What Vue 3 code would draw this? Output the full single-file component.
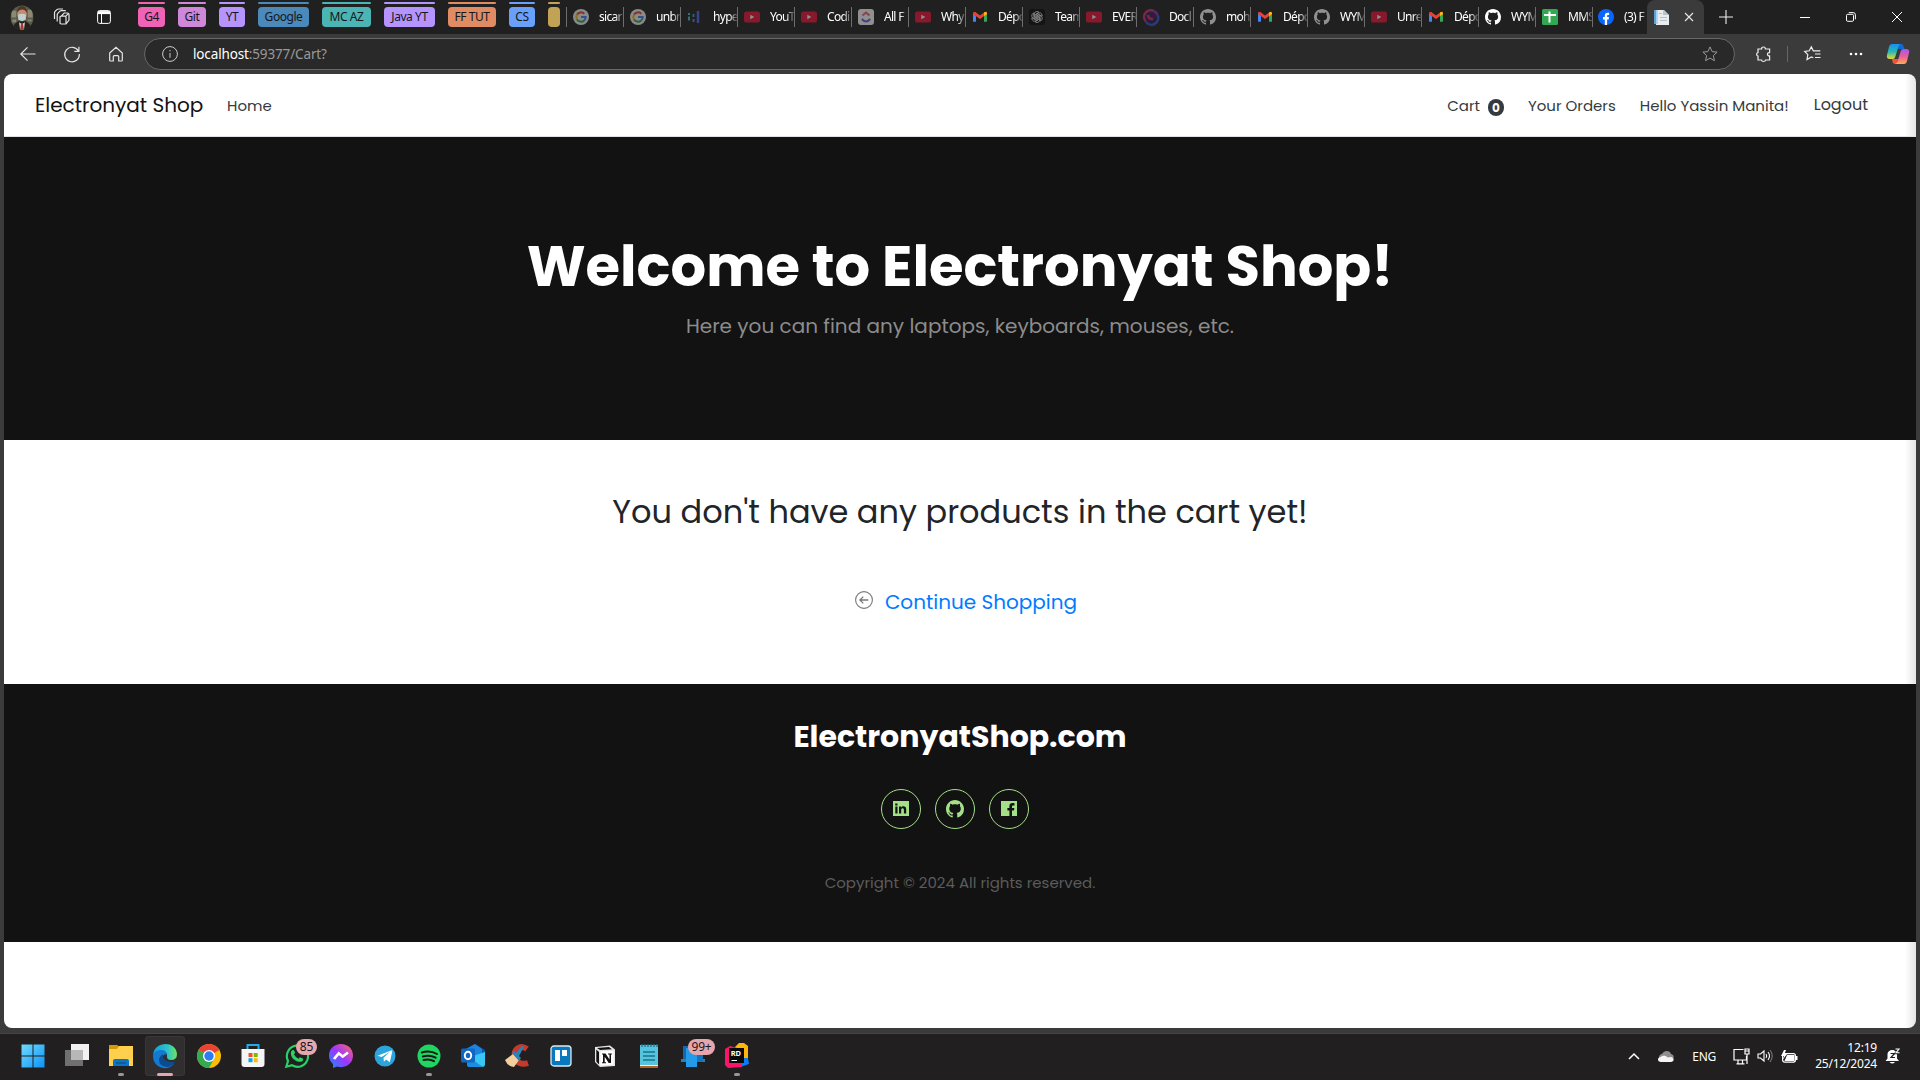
<script setup>
const groups = [
  { label: 'G4', color: '#f062b5', width: 27, gap: 13 },
  { label: 'Git', color: '#cf87da', width: 28, gap: 13 },
  { label: 'YT', color: '#b594ff', width: 26, gap: 13 },
  { label: 'Google', color: '#4a89ba', width: 51, gap: 13 },
  { label: 'MC AZ', color: '#4bb5b5', width: 49, gap: 13 },
  { label: 'Java YT', color: '#b594ff', width: 51, gap: 13 },
  { label: 'FF TUT', color: '#e08b61', width: 48, gap: 13 },
  { label: 'CS', color: '#69a1fa', width: 26, gap: 13 },
  { label: '', color: '#c2a255', width: 12, gap: 0 },
]
const tabs = [
  ['google', 'sicar', true], ['google', 'unbr', true], ['hyper', 'hype', true], ['youtube', 'YouT', true],
  ['youtube', 'Codi', true], ['clickup', 'All F', true], ['youtube', 'Why', true], ['gmail', 'Dépo', false],
  ['openai', 'Team', false], ['youtube', 'EVER', true], ['doc', 'Docl', true], ['github', 'moh', true],
  ['gmail', 'Dépo', false], ['github', 'WYM', true], ['youtube', 'Unre', true], ['gmail', 'Dépo', false],
  ['github', 'WYM', false], ['sheets', 'MMS', false], ['facebook', '(3) F', false],
].map(([icon, title, dim]) => ({ icon, title, dim }))
const petals = [0, 60, 120, 180, 240, 300]
const ghPath = 'M8 0C3.58 0 0 3.58 0 8c0 3.54 2.29 6.53 5.47 7.59.4.07.55-.17.55-.38 0-.19-.01-.82-.01-1.49-2.01.37-2.53-.49-2.69-.94-.09-.23-.48-.94-.82-1.13-.28-.15-.68-.52-.01-.53.63-.01 1.08.58 1.23.82.72 1.21 1.87.87 2.33.66.07-.52.28-.87.51-1.07-1.78-.2-3.64-.89-3.64-3.95 0-.87.31-1.59.82-2.15-.08-.2-.36-1.02.08-2.12 0 0 .67-.21 2.2.82.64-.18 1.32-.27 2-.27s1.36.09 2 .27c1.53-1.04 2.2-.82 2.2-.82.44 1.1.16 1.92.08 2.12.51.56.82 1.27.82 2.15 0 3.07-1.87 3.75-3.65 3.95.29.25.54.73.54 1.48 0 1.07-.01 1.93-.01 2.2 0 .21.15.46.55.38A8.01 8.01 0 0 0 16 8c0-4.42-3.58-8-8-8z'
const apps = ['start', 'taskview', 'explorer', 'edge', 'chrome', 'store', 'whatsapp', 'messenger', 'telegram', 'spotify', 'outlook', 'ccleaner', 'trello', 'notion', 'notepad', 'phone', 'rider']
const running = ['explorer', 'spotify', 'rider']
const badges = { whatsapp: '85', phone: '99+' }
</script>

<template>
  <div class="screen">
    <header class="tabstrip">
      <div class="left-tools">
        <svg class="avatar" viewBox="0 0 24 26"><defs><clipPath id="av"><ellipse cx="12" cy="13" rx="12" ry="12.5" /></clipPath></defs><g clip-path="url(#av)"><path fill="#5d5b4b" d="M0 0h24v26H0z" /><path fill="#8b8873" d="M1 6h5v7H1zM18 5h5v8h-5zM2 15h4v3H2zM18 15h4v2h-4z" /><path fill="#24201d" d="M3 26l1-6 4-3h8l4 3 1 6z" /><ellipse cx="12" cy="9" rx="5" ry="7" fill="#c58d70" /><path fill="#503529" d="M7 8c-1-9 11-9 10 0-2-4-7-5-10 0z" /><path fill="#bfd0d1" d="M8 10q4-2 8 0v5l-4 2-4-2z" /><path fill="#ddd" d="M9 18l3 2 3-2-1 8h-4z" /><path fill="#a43a2b" d="M11 19h2l1 7h-4z" /></g></svg>
        <svg class="workspaces" viewBox="0 0 18 18" fill="none" stroke="#e4e4e4" stroke-width="1.2"><path d="m8.2 8.2 3-3.2h3.3q1.5 0 1.5 1.5v5.5l-3 4H8.2q-1.2 0-1.2-1.2V9.4q0-1.2 1.2-1.2h3.6q1.2 0 1.2 1.2V16M12.7 8.3 15.5 5.3" /><path d="M4.2 13.5V7q0-1 .8-1.800l2-2q.6-.6 1.5-.6h4.300M1.5 11V5q0-1 .8-1.800l1.600-1.600Q4.600 1 5.500 1H10" /></svg>
        <svg class="vtabs" viewBox="0 0 14 14" fill="none" stroke="#fff"><rect x=".6" y=".6" width="12.8" height="12.8" rx="2" /><path d="M1 2.6h12" stroke-width="3" /><path d="M4.5 4v9" /></svg>
      </div>
      <div class="groups">
        <div v-for="(g, i) in groups" :key="i" class="group" :style="{ width: g.width + 'px', marginRight: g.gap + 'px' }">
          <i :style="{ background: g.color }"></i><span :style="{ background: g.color }">{{ g.label }}</span>
        </div>
      </div>
      <div class="tabs">
        <div v-for="(t, i) in tabs" :key="i" class="tab">
          <svg class="fav" :class="{ dim: t.dim }" viewBox="0 0 16 16">
            <g v-if="t.icon === 'google'"><circle cx="8" cy="8" r="8" fill="#f4f4f4" /><g fill="none" stroke-width="2"><path stroke="#ea4335" d="M4 5.6A4.7 4.7 0 0 1 11.3 4.7" /><path stroke="#fbbc05" d="M4 5.6a4.7 4.7 0 0 0 0 4.8" /><path stroke="#34a853" d="M4 10.4a4.7 4.7 0 0 0 7.2 1" /><path stroke="#4285f4" d="M11.2 11.4A4.7 4.7 0 0 0 12.7 8H8" /></g></g>
            <g v-else-if="t.icon === 'hyper'" stroke-width="2"><path stroke="#45bfc6" d="M2 4v2M2 7.5v4" /><path stroke="#518de0" d="M6.5 5v3M6.5 10v3" /><path stroke="#5267f6" stroke-width="2.5" d="M11 2v12" /></g>
            <g v-else-if="t.icon === 'youtube'"><rect y="2.5" width="16" height="11" rx="2.6" fill="#f01339" /><path fill="#fff" d="m6.3 5.7 4 2.3-4 2.3z" /></g>
            <g v-else-if="t.icon === 'clickup'"><rect width="16" height="16" rx="3" fill="#fff" /><path d="m4.5 6.5 3.5-3 3.5 3" fill="none" stroke="#f3647a" stroke-width="2" /><path d="M3.8 10q4.2 5 8.4 0" fill="none" stroke="#715df2" stroke-width="2" /></g>
            <g v-else-if="t.icon === 'gmail'"><path fill="#4285f4" d="M1 4.2v8.6h3V7z" /><path fill="#34a853" d="M15 4.2v8.6h-3V7z" /><path fill="#ea4335" d="M1 3.5 3 2.7l5 3.9 5-3.9 2 .8V5l-7 5-7-5z" /><path fill="#fbbc05" d="m12 3.4 2-.7 1 1.2V5l-3 2.2z" /></g>
            <g v-else-if="t.icon === 'openai'"><rect width="16" height="16" rx="2.5" fill="#141414" /><g fill="none" stroke="#8c8c8c" stroke-width=".8"><path v-for="p in petals" :key="p" d="M5.2 9.8V5q.2-2.5 2.7-2.6 1.3 0 2 .8L7 5v4" :transform="`rotate(${p} 8 8)`" /></g></g>
            <g v-else-if="t.icon === 'doc'" fill="none" stroke-width="2.6"><circle cx="8" cy="8" r="5" fill="#42165a" stroke="none" /><path stroke="#3450e0" d="M14.5 6A6.7 6.7 0 1 1 2.5 12" /><path stroke="#d12c70" d="M2.5 12A6.6 6.6 0 0 1 11 2.2M5 6q0 4 5 4" /><path stroke="#8a35b0" d="M11 2.2q2.7 1.2 3.5 3.8" /></g>
            <path v-else-if="t.icon === 'github'" fill="#fff" :d="ghPath" />
            <g v-else-if="t.icon === 'sheets'"><rect width="16" height="16" rx="1.5" fill="#32a853" /><path d="M2 6h12M7.5 2.5v11" stroke="#fff" stroke-width="2" /></g>
            <g v-else><circle cx="8" cy="8" r="8" fill="#0866ff" /><path fill="#fff" d="M6.8 16v-5.5H5V8h1.8V6.8c0-2.5 1.2-3.5 4.3-3V6c-1.6-.1-2 0-2 1v1H11l-.4 2.5H9.1V16z" /></g>
          </svg>
          <span class="tab-title">{{ t.title }}</span>
        </div>
      </div>
      <div class="active-tab">
        <svg class="page-icon" viewBox="0 0 17 17"><path fill="#e9edf2" d="M3 1h8l5 5v10H3z" /><path fill="#5aa5d8" d="M1 1h2.500v14H1z" /><path fill="#b5d6ec" d="M3.500 1H5v14H3.500z" /><path fill="#b9c1ca" d="M10 1v5h6zM6 4h3v1H6zM7 8h7v1H7zM7 11h7v1H7z" /></svg>
        <svg class="close" viewBox="0 0 10 10"><path d="m1 1 8 8M9 1 1 9" stroke="#e8e8e8" stroke-width="1.1" /></svg>
      </div>
      <svg class="plus" viewBox="0 0 14 14"><path d="M7 0v14M0 7h14" stroke="#eee" stroke-width="1.1" /></svg>
      <div class="window-buttons">
        <svg viewBox="0 0 10 10"><path d="M0 5.5h10" /></svg>
        <svg viewBox="0 0 10 10"><rect x=".5" y="2.3" width="7" height="7" rx="1.2" /><path d="M2.8.6h4.4q2.2 0 2.2 2.2v4.5" /></svg>
        <svg viewBox="0 0 10 10"><path d="m0 0 10 10M10 0 0 10" /></svg>
      </div>
    </header>

    <div class="toolbar">
      <div class="nav-buttons">
        <svg viewBox="0 0 16 16"><path d="M15.5 8H.8M7.5 1.3.8 8l6.7 6.7" /></svg>
        <svg viewBox="0 0 16 16"><path d="M14.5 5.2A7.3 7.3 0 1 0 15.3 8M14.9.8v4.6h-4.6" /></svg>
        <svg viewBox="0 0 16 16"><path d="M1.7 7 8 1.2 14.3 7v7.2q0 .8-.8.8h-2.8V10.6q0-1-1-1H6.3q-1 0-1 1V15H2.5q-.8 0-.8-.8z" /></svg>
      </div>
      <div class="address">
        <svg class="info" viewBox="0 0 16 16"><circle cx="8" cy="8" r="7.4" /><path d="M8 7v4.7M8 4v1.3" /></svg>
        <p><b>localhost</b>:59377/Cart?</p>
        <svg class="star" viewBox="0 0 16 16"><path d="m8 .9 2.1 4.7 5 .5-3.7 3.5 1 5.1L8 12.1l-4.4 2.6 1-5.1L.9 6.1l5-.5z" /></svg>
      </div>
      <div class="tools">
        <svg viewBox="0 0 16 16"><path d="M5.6 3q0-2 1.9-2t1.9 2h4.2v3.6c-2.8-.3-2.8 3.6 0 3.3V14H9.5q-.2 1.5-2 1.5T5.6 14H2v-3.8Q.6 9.8.6 8.3T2 6.6V3z" /></svg>
        <i></i>
        <svg class="favs" viewBox="0 0 17 16"><path d="m9.3 11.8-2-.9L3 13.5l.8-4.8L.7 5.5l4.6-.7L7.3.8l2 4h7M11 8h5.5M11 11.5h5.5" /></svg>
        <svg class="dots" viewBox="0 0 14 4"><circle cx="2" cy="2" r="1.3" /><circle cx="7" cy="2" r="1.3" /><circle cx="12" cy="2" r="1.3" /></svg>
        <svg class="copilot" viewBox="0 0 22 20"><defs><linearGradient id="cpa" x1="0" y1="0" x2="0" y2="1"><stop stop-color="#1a8fef" /><stop offset=".5" stop-color="#25b8b5" /><stop offset="1" stop-color="#e5da31" /></linearGradient><linearGradient id="cpb" x1="0" y1="0" x2="0" y2="1"><stop stop-color="#a05aef" /><stop offset=".5" stop-color="#ec5d9a" /><stop offset="1" stop-color="#ffac55" /></linearGradient></defs><path fill="#1267d4" d="M10 0h4q2 0 2.5 2l1 3h-6z" /><path fill="#f2533b" d="M5 15h6l-1 5H8q-2 0-2.5-2z" /><path fill="url(#cpa)" d="M5 0h9q-2 .5-2.7 3L8.2 13q-.6 2-2.6 2H3q-4 0-3-4l2-8q.7-3 3-3z" /><path fill="url(#cpb)" d="M17 20H8q2-.5 2.7-3l3.1-10q.6-2 2.6-2H19q4 0 3 4l-2 8q-.7 3-3 3z" /></svg>
      </div>
    </div>

    <div class="viewport">
      <nav class="site-nav">
        <a class="brand">Electronyat Shop</a>
        <a class="home">Home</a>
        <div class="user-links">
          <a class="cart">Cart</a><span class="count">0</span>
          <a class="orders">Your Orders</a>
          <a class="hello">Hello Yassin Manita!</a>
          <a class="logout">Logout</a>
        </div>
      </nav>
      <section class="hero">
        <h1>Welcome to Electronyat Shop!</h1>
        <p>Here you can find any laptops, keyboards, mouses, etc.</p>
      </section>
      <main class="cart-empty">
        <h2>You don't have any products in the cart yet!</h2>
        <div class="continue">
          <svg viewBox="0 0 18 18" fill="none" stroke="#777" stroke-width="1.1"><circle cx="9" cy="9" r="8.4" /><path d="M13.3 9H5M8.3 5.6 4.9 9l3.4 3.4" stroke-width="1.3" /></svg>
          <a>Continue Shopping</a>
        </div>
      </main>
      <footer class="site-footer">
        <h3>ElectronyatShop.com</h3>
        <div class="social">
          <a><svg viewBox="0 0 16 16"><path fill-rule="evenodd" d="M0 0h16v15H0zM2.3 5.6v6.9h2.2V5.6zM2.2 2.4v2h2.3v-2zM6 5.6v6.9h2.2V8.7c0-2 2.7-2 2.7 0v3.8h2.3V8.2c0-3.4-3.7-3.7-5-1.6v-1z" /></svg></a>
          <a><svg class="gh" viewBox="0 0 16 16"><path :d="ghPath" /></svg></a>
          <a><svg viewBox="0 0 16 16"><path fill-rule="evenodd" d="M0 0h16v15h-5V9.6h2l.4-2.5H11V5.6c0-.9.4-1.2 1.3-1.2h1.2V2.2C10 1.5 8.4 2.6 8.4 5.2v1.9h-2v2.5h2V15H0z" /></svg></a>
        </div>
        <p>Copyright © 2024 All rights reserved.</p>
      </footer>
    </div>

    <div class="taskbar">
      <div class="apps">
        <div v-for="a in apps" :key="a" class="app" :class="{ active: a === 'edge' }">
          <svg viewBox="0 0 24 24">
            <g v-if="a === 'start'" fill="url(#win)"><defs><linearGradient id="win" gradientUnits="userSpaceOnUse" x1="0" y1="0" x2="24" y2="24"><stop stop-color="#73dcff" /><stop offset="1" stop-color="#0a91f5" /></linearGradient></defs><path d="M.5.5h11v11H.5zM12.5.5h11v11h-11zM.5 12.5h11v11H.5zM12.5 12.5h11v11h-11z" /></g>
            <g v-else-if="a === 'taskview'"><path fill="#f1f1f1" d="M6 0h18v16H6z" /><path fill="#707070" d="M0 6h18v16H0z" /><path fill="#b8b8b8" d="M6 6h12v10H6z" /></g>
            <g v-else-if="a === 'explorer'"><path fill="#d79808" d="M0 1h8l3 2-3 3H0z" /><path fill="#ffd04d" d="M0 5h8l2-3h14v20H0z" /><path fill="#0875c9" d="M4 22v-5q0-2 2-2h12q2 0 2 2v5z" /><path fill="#125b97" d="M7 18h10v2H7z" /></g>
            <g v-else-if="a === 'edge'"><defs><linearGradient id="eg" x1="0" x2="1"><stop stop-color="#159bd7" /><stop offset=".6" stop-color="#2bc4cb" /><stop offset="1" stop-color="#6ee45a" /></linearGradient></defs><path fill="url(#eg)" d="M0 11C1-3 23-4 24 10q0 6-6 6-4 0-4-3Q15 7 7 7q-5 0-7 4z" /><path fill="#1479d0" d="M0 12C1 5 13 4 14 10q-5 0-5 6 1 7 12 4C14 28 0 24 0 12z" /><path fill="#0b4b91" d="M10 10q-1 9 12 8-7 9-15 2-3-6 3-10z" /></g>
            <g v-else-if="a === 'chrome'"><circle cx="12" cy="12" r="12" fill="#fbbc05" /><path fill="#ea4335" d="M12 12 1.6 6A12 12 0 0 1 22.4 6z" /><path fill="#34a853" d="M1.6 6 12 12l5 3-5 9A12 12 0 0 1 1.6 6z" /><circle cx="12" cy="12" r="6" fill="#fff" /><circle cx="12" cy="12" r="4.7" fill="#2a7df4" /></g>
            <g v-else-if="a === 'store'"><path d="M6.5 6V1h11v5" fill="none" stroke="#25a9e7" stroke-width="2" /><path fill="#f5f5f5" d="M.5 5h23v15q0 3-3 3h-17q-3 0-3-3z" /><path fill="#f25022" d="M7.5 9h4v4h-4z" /><path fill="#7fba00" d="M12.7 9h4v4h-4z" /><path fill="#00a4ef" d="M7.5 14.2h4v4h-4z" /><path fill="#ffb900" d="M12.7 14.2h4v4h-4z" /></g>
            <g v-else-if="a === 'whatsapp'"><path d="M1.3 22.8 3 17A10.6 10.6 0 1 1 7 21.3z" fill="none" stroke="#25d366" stroke-width="2.2" /><path fill="#25d366" d="M7 6.5c2-1.5 3 1.5 3 2.5L9 10.5q2 3.5 4.5 4.2l1.5-1.5 3.3 1.5c0 6-12 3-12.5-5.5q0-2 1.2-2.7z" /></g>
            <g v-else-if="a === 'messenger'"><defs><linearGradient id="ms" x1="0" y1="1" x2="1" y2="0"><stop stop-color="#168cff" /><stop offset=".5" stop-color="#9e35ff" /><stop offset="1" stop-color="#ff6968" /></linearGradient></defs><path fill="url(#ms)" d="M12 0C5 0 0 5 0 11.6c0 4 2 7 4 8.5V24l4-1.5C16 25 24 20 24 11.6 24 5 19 0 12 0z" /><path d="m5 15 4.7-5.7 4 3.2L19 8.5" fill="none" stroke="#fff" stroke-width="2.7" /></g>
            <g v-else-if="a === 'telegram'"><circle cx="12" cy="12" r="10.5" fill="#2ba5dc" /><path fill="#fff" d="m4.5 11.8 13.7-5.3c.9-.2 1.2.2 1 1.2l-2.4 10.5-3.7-2.7-2.2 2.2-.4-4 6.5-6-8.4 5.3z" /></g>
            <g v-else-if="a === 'spotify'"><circle cx="12" cy="12" r="11.5" fill="#1ed760" /><path d="M4.8 8.5Q13 6 20 10M5.8 12.5q7-2 12.8 1.2M6.5 16q6-1.5 10.5 1.2" fill="none" stroke="#191919" stroke-width="2" stroke-linecap="round" /></g>
            <g v-else-if="a === 'outlook'"><path fill="#0a58ae" d="m3 6 11-6 10 6v7H3z" /><path fill="#1d83df" d="m5 5 9-5 7 5v9H5z" /><path fill="#38c7f4" d="M6 14 24 8v12q0 3-3 3H9q-3 0-3-3z" /><path fill="#1b8ce1" d="m6 12 16 11H9q-3 0-3-3z" /><rect y="4.5" width="14" height="14" rx="1.5" fill="#0f67c2" /><ellipse cx="7" cy="11.5" rx="3.2" ry="3.7" fill="none" stroke="#fff" stroke-width="1.9" /></g>
            <g v-else-if="a === 'ccleaner'"><path fill="none" stroke="#c63a2b" stroke-width="6" d="M22 5c-7-5-14 1-12 8 1 6 7 8 13 6" /><path fill="#f3cfa0" d="m0 16 8-6 6 6-5 7q-6 0-9-7z" /><path fill="#2c82ba" d="m7 9 2-2 7 7-2 3zM11 9l6-7 2 1-5 9z" /></g>
            <g v-else-if="a === 'trello'"><rect x="2" y="2" width="20" height="20" rx="3" fill="#0879bf" stroke="#dceaf2" stroke-width="1.3" /><path fill="#fff" d="M6 6h5v11H6zM13 6h5v6h-5z" /></g>
            <g v-else-if="a === 'notion'"><path fill="#e6e6e6" d="m2 3 15-1.5 5 4V22L7 23l-5-5z" /><path fill="#111" d="m4 4 12-1 3 2.2L7 6zM3.3 5.5 6 8v12.5L3.3 17.5z" /><path fill="#fff" d="M7.5 7.5 20.5 7v13.5l-13 1z" /><path fill="#111" d="M9 9.5h3.5l4 6V10.5H15v-1h4v1h-1V19h-2.3l-4-6.3v5.6h1.3v1H9v-1h1v-7.800H9z" /></g>
            <g v-else-if="a === 'notepad'"><path fill="#56c4dc" d="M3 1h18v20H3z" /><path fill="#b66225" d="M3 22h18v2H3z" /><path fill="#eee" d="M3 21h18v1H3z" /><path d="M5 0v3M8 0v3M11 0v3M14 0v3M17 0v3M20 0v3M6 8h12M6 12h12M6 16h12" stroke="#17748c" stroke-width="1.3" /></g>
            <g v-else-if="a === 'phone'"><path fill="#1269b1" d="M2 2h10v15H2z" /><path fill="#1b83ce" d="M0 15h24v3H0z" /><path fill="#239be9" d="M5 4h11v19H5z" /><path fill="#1475bd" d="M16 7h6v11h-6z" /></g>
            <g v-else><path fill="#087cfa" d="M15 3h6l3 17-9 3z" /><path fill="#fdb60d" d="m10 3 4-4h5l4 3v12h-9z" /><path fill="#ff126b" d="M0 5 5 2l11 3 1 18-14 1-3-3z" /><path fill="#080808" d="M4 4h15v15H4z" /><path stroke="#fff" d="M6.5 16.5h5.5" /><text x="5.7" y="12" class="rd">RD</text></g>
          </svg>
          <b v-if="badges[a]" :class="{ wide: a === 'phone' }">{{ badges[a] }}</b>
          <i v-if="running.includes(a)"></i>
          <i v-if="a === 'edge'" class="current"></i>
        </div>
      </div>
      <div class="tray">
        <svg class="chev" viewBox="0 0 12 8"><path d="m1 7 5-5 5 5" fill="none" stroke="#fff" stroke-width="1.5" /></svg>
        <svg class="cloud" viewBox="0 0 16 11"><path fill="#8f8f8f" d="M1 7C1 3 4 3 4 3c2-4 8-4 9 0 4 1 3 5 1 6H3z" /><path fill="#f5f5f5" d="M3 11C-1 11-1 6 3 6c2-2 5-1 6 0 1 1 3 0 4 0 4 1 3 5 0 5z" /></svg>
        <span class="lang">ENG</span>
        <svg class="net" viewBox="0 0 17 17" fill="none" stroke="#fff" stroke-width="1.2"><path d="M10.5 1.5H1v10.5h12.5V8M5 12.5V15.5M9.5 12.5V15.5M3.5 15.800h8M12 1h4v5h-4zM14 6v10M12 3h4" /></svg>
        <svg class="vol" viewBox="0 0 16 14" fill="none" stroke="#fff" stroke-width="1.1"><path d="M1 5h2.5L7 2v10L3.5 9H1zM9 5q1.5 2 0 4M11 3q3 4 0 8" /><path d="M13 1q4.5 6 0 12" stroke="#777" /></svg>
        <svg class="bat" viewBox="0 0 17 13"><rect x="1.6" y="3.6" width="12.8" height="8.5" rx="2" fill="none" stroke="#fff" stroke-width="1.2" /><path fill="#fff" d="M6 5h7.500v6H3.500zM15 6h1.500v4H15zM3 0 0 6h3L1.500 10 6 4H3.500L5 0z" /></svg>
        <div class="clock"><span>12:19</span><span>25/12/2024</span></div>
        <svg class="bell" viewBox="0 0 16 16"><path fill="#fff" d="M.5 13 2.500 10.500V6.500C2.500.5 12 .5 12 6.500v4L14 13zM4.500 14h5.500q-2.700 3-5.500 0z" /><path d="M5.500 5.500h4L6 9.500h4" fill="none" stroke="#222" stroke-width="1.200" /><path d="M10.500 1h4L11 5h4" fill="none" stroke="#222" stroke-width="2.500" /><path d="M10.500 1h3.500L11 4.800h3.500" fill="none" stroke="#fff" stroke-width="1.100" /></svg>
      </div>
    </div>
  </div>
</template>

<style>
body { margin: 0; overflow: hidden; background: #3b3b3b; }
</style>

<style scoped>
* { box-sizing: border-box; }
.screen { width: 1920px; height: 1080px; display: flex; flex-direction: column; overflow: hidden; background: #3b3b3b; font-family: "Noto Sans", sans-serif; }
svg { display: block; flex: none; overflow: visible; }
h1, h2, h3, p { margin: 0; }
.tabstrip { height: 34px; flex: none; display: flex; background: #202020; }
.left-tools { width: 138px; flex: none; display: flex; align-items: center; padding-left: 10px; }
.avatar { width: 24px; height: 25px; }
.workspaces { width: 18px; height: 18px; margin-left: 19px; }
.vtabs { width: 14px; height: 14px; margin-left: 26px; }
.groups { width: 428px; flex: none; display: flex; }
.group { flex: none; padding-top: 2px; }
.group i { display: block; height: 2px; border-radius: 1px; }
.group span { display: flex; align-items: center; justify-content: center; height: 20px; margin-top: 3px; padding-bottom: 1px; border-radius: 4px; font-size: 12px; letter-spacing: -.45px; color: #16161c; white-space: nowrap; }
.tabs { display: flex; flex: none; }
.tab { width: 57px; height: 20px; margin-top: 7px; padding-left: 6px; border-left: 1px solid #6e6e6e; display: flex; align-items: center; }
.tab:last-child .fav { margin-left: -1px; }
.fav { width: 16px; height: 16px; }
.fav.dim { opacity: .5; }
.tab-title { width: 24px; margin-left: 10px; overflow: hidden; white-space: nowrap; font-size: 12px; line-height: 20px; letter-spacing: -.7px; color: #fff; -webkit-mask-image: linear-gradient(90deg, #000 66%, transparent 108%); mask-image: linear-gradient(90deg, #000 66%, transparent 108%); }
.active-tab { width: 57px; flex: none; margin-left: -2px; padding: 0 0 0 6px; height: 34px; display: flex; align-items: center; gap: 14px; border-radius: 8px 8px 0 0; background: #3b3b3b; }
.page-icon { width: 17px; height: 17px; }
.close { width: 10px; height: 10px; }
.plus { width: 14px; height: 14px; margin: 10px 0 0 15px; }
.window-buttons { display: flex; gap: 36px; margin: 12px 0 0 auto; padding-right: 18px; }
.window-buttons svg { width: 10px; height: 10px; fill: none; stroke: #fff; stroke-width: 1; }
.toolbar { height: 40px; flex: none; display: flex; align-items: center; background: #3b3b3b; }
.nav-buttons { width: 144px; flex: none; display: flex; gap: 28px; padding-left: 20px; }
.nav-buttons svg { width: 16px; height: 16px; fill: none; stroke: #e6e6e6; stroke-width: 1.2; }
.address { width: 1591px; height: 32px; flex: none; display: flex; align-items: center; padding: 0 16px 0 17px; border: 1px solid #686868; border-radius: 16px; background: #292929; }
.info { width: 16px; height: 16px; fill: none; stroke: #ccc; }
.address p { margin-left: 15px; font-size: 13.5px; letter-spacing: -.14px; line-height: 20px; color: #999; }
.address b { font-weight: 400; color: #fff; }
.star { width: 16px; height: 16px; margin-left: auto; fill: none; stroke: #999; stroke-width: 1; }
.tools { flex: 1; display: flex; align-items: center; padding-left: 21px; }
.tools svg { width: 16px; height: 16px; fill: none; stroke: #eee; stroke-width: 1.2; }
.tools i { width: 1px; height: 16px; margin: 0 16px 0 15px; background: #666; }
.tools .favs { width: 17px; }
.tools .dots { width: 14px; height: 4px; margin-left: 28px; fill: #fff; stroke: none; }
.tools .copilot { width: 22px; height: 20px; margin-left: 24px; stroke: none; }
.viewport { width: 1912px; height: 954px; flex: none; margin-left: 4px; border-radius: 8px; overflow: hidden; background: linear-gradient(90deg, #fff 1901px, #e6e6e6 1912px); font-family: Poppins, Inter, sans-serif; }
.site-nav { height: 63px; display: flex; align-items: center; padding: 0 48px 0 31px; border-bottom: 1px solid #dee2e6; color: #343a40; font-size: 15px; white-space: nowrap; }
.brand { width: 168px; font-size: 20px; color: #121212; }
.home { margin: 1px 0 0 24px; }
.user-links { display: flex; align-items: center; margin-left: auto; }
.count { width: 16px; height: 17px; margin: 4px 24px 0 8px; border-radius: 8px; background: #343a40; color: #fff; font-size: 12px; font-weight: 700; line-height: 17px; text-align: center; }
.hello { margin: 1px 25px 0 24px; }
.cart, .orders { margin-top: 1px; }
.logout { font-size: 16px; margin-top: -1px; }
.hero { height: 303px; display: flex; flex-direction: column; align-items: center; padding-top: 94px; background: #121212; white-space: nowrap; }
.hero h1 { font-size: 56px; line-height: 72px; font-weight: 700; color: #fff; }
.hero p { margin-top: 7px; font-size: 20px; line-height: 32px; color: #8c8c8c; }
.cart-empty { height: 244px; display: flex; flex-direction: column; align-items: center; padding-top: 48px; }
.cart-empty h2 { font-size: 32px; line-height: 48px; font-weight: 400; color: #212529; white-space: nowrap; }
.continue { display: flex; align-items: center; gap: 12px; margin-top: 50px; padding-left: 12px; font-size: 20px; line-height: 32px; color: #007bff; }
.continue svg { width: 18px; height: 18px; margin-top: -4px; }
.site-footer { height: 258px; display: flex; flex-direction: column; align-items: center; padding-top: 32px; background: #121212; }
.site-footer h3 { font-size: 30px; line-height: 41px; font-weight: 700; color: #fff; }
.social { display: flex; gap: 14px; margin: 32px 10px 0 0; }
.social a { width: 40px; height: 40px; display: flex; align-items: center; justify-content: center; border: 1px solid #a4e087; border-radius: 50%; }
.social svg { width: 16px; height: 16px; fill: #a4e087; }
.social .gh { width: 18px; height: 18px; }
.site-footer p { margin-top: 42px; font-size: 15px; line-height: 24px; color: #5c5c5c; }
.taskbar { height: 47px; flex: none; margin-top: 5px; display: flex; justify-content: space-between; background: #211f1f; border-top: 1px solid #454545; }
.apps { display: flex; gap: 4px; padding: 2px 0 0 13px; }
.app { position: relative; width: 40px; height: 40px; padding: 8px 8px; border-radius: 4px; }
.app.active { background: #302e2e; box-shadow: inset 0 0 0 1px #393737; }
.app svg { width: 24px; height: 24px; }
.app b { position: absolute; left: 19px; top: 3px; width: 21px; height: 16px; border-radius: 8px; background: #e5a6ad; color: #1c1718; font-size: 12px; letter-spacing: -.2px; line-height: 16px; font-weight: 400; text-align: center; }
.app b.wide { left: 15px; width: 27px; }
.app i { position: absolute; left: 17px; bottom: 0; width: 6px; height: 3px; border-radius: 2px; background: #989696; }
.app i.current { left: 12px; width: 16px; background: #e5a6ad; }
.rd { font: 700 7.5px "Noto Sans", sans-serif; fill: #fff; }
.tray { display: flex; align-items: center; padding-bottom: 2px; color: #fff; font-size: 12px; }
.chev { width: 12px; height: 8px; }
.cloud { width: 16px; height: 11px; margin-left: 18px; }
.lang { margin: 1px 17px 0 18px; font-size: 12px; letter-spacing: -.3px; }
.net { width: 17px; height: 17px; }
.vol { width: 16px; height: 14px; margin-left: 7px; }
.bat { width: 17px; height: 13px; margin-left: 8px; }
.clock { display: flex; flex-direction: column; align-items: flex-end; width: 79px; font-size: 12px; line-height: 16px; letter-spacing: -.2px; white-space: nowrap; }
.bell { width: 16px; height: 16px; margin: 0 19px 0 8px; }
</style>
